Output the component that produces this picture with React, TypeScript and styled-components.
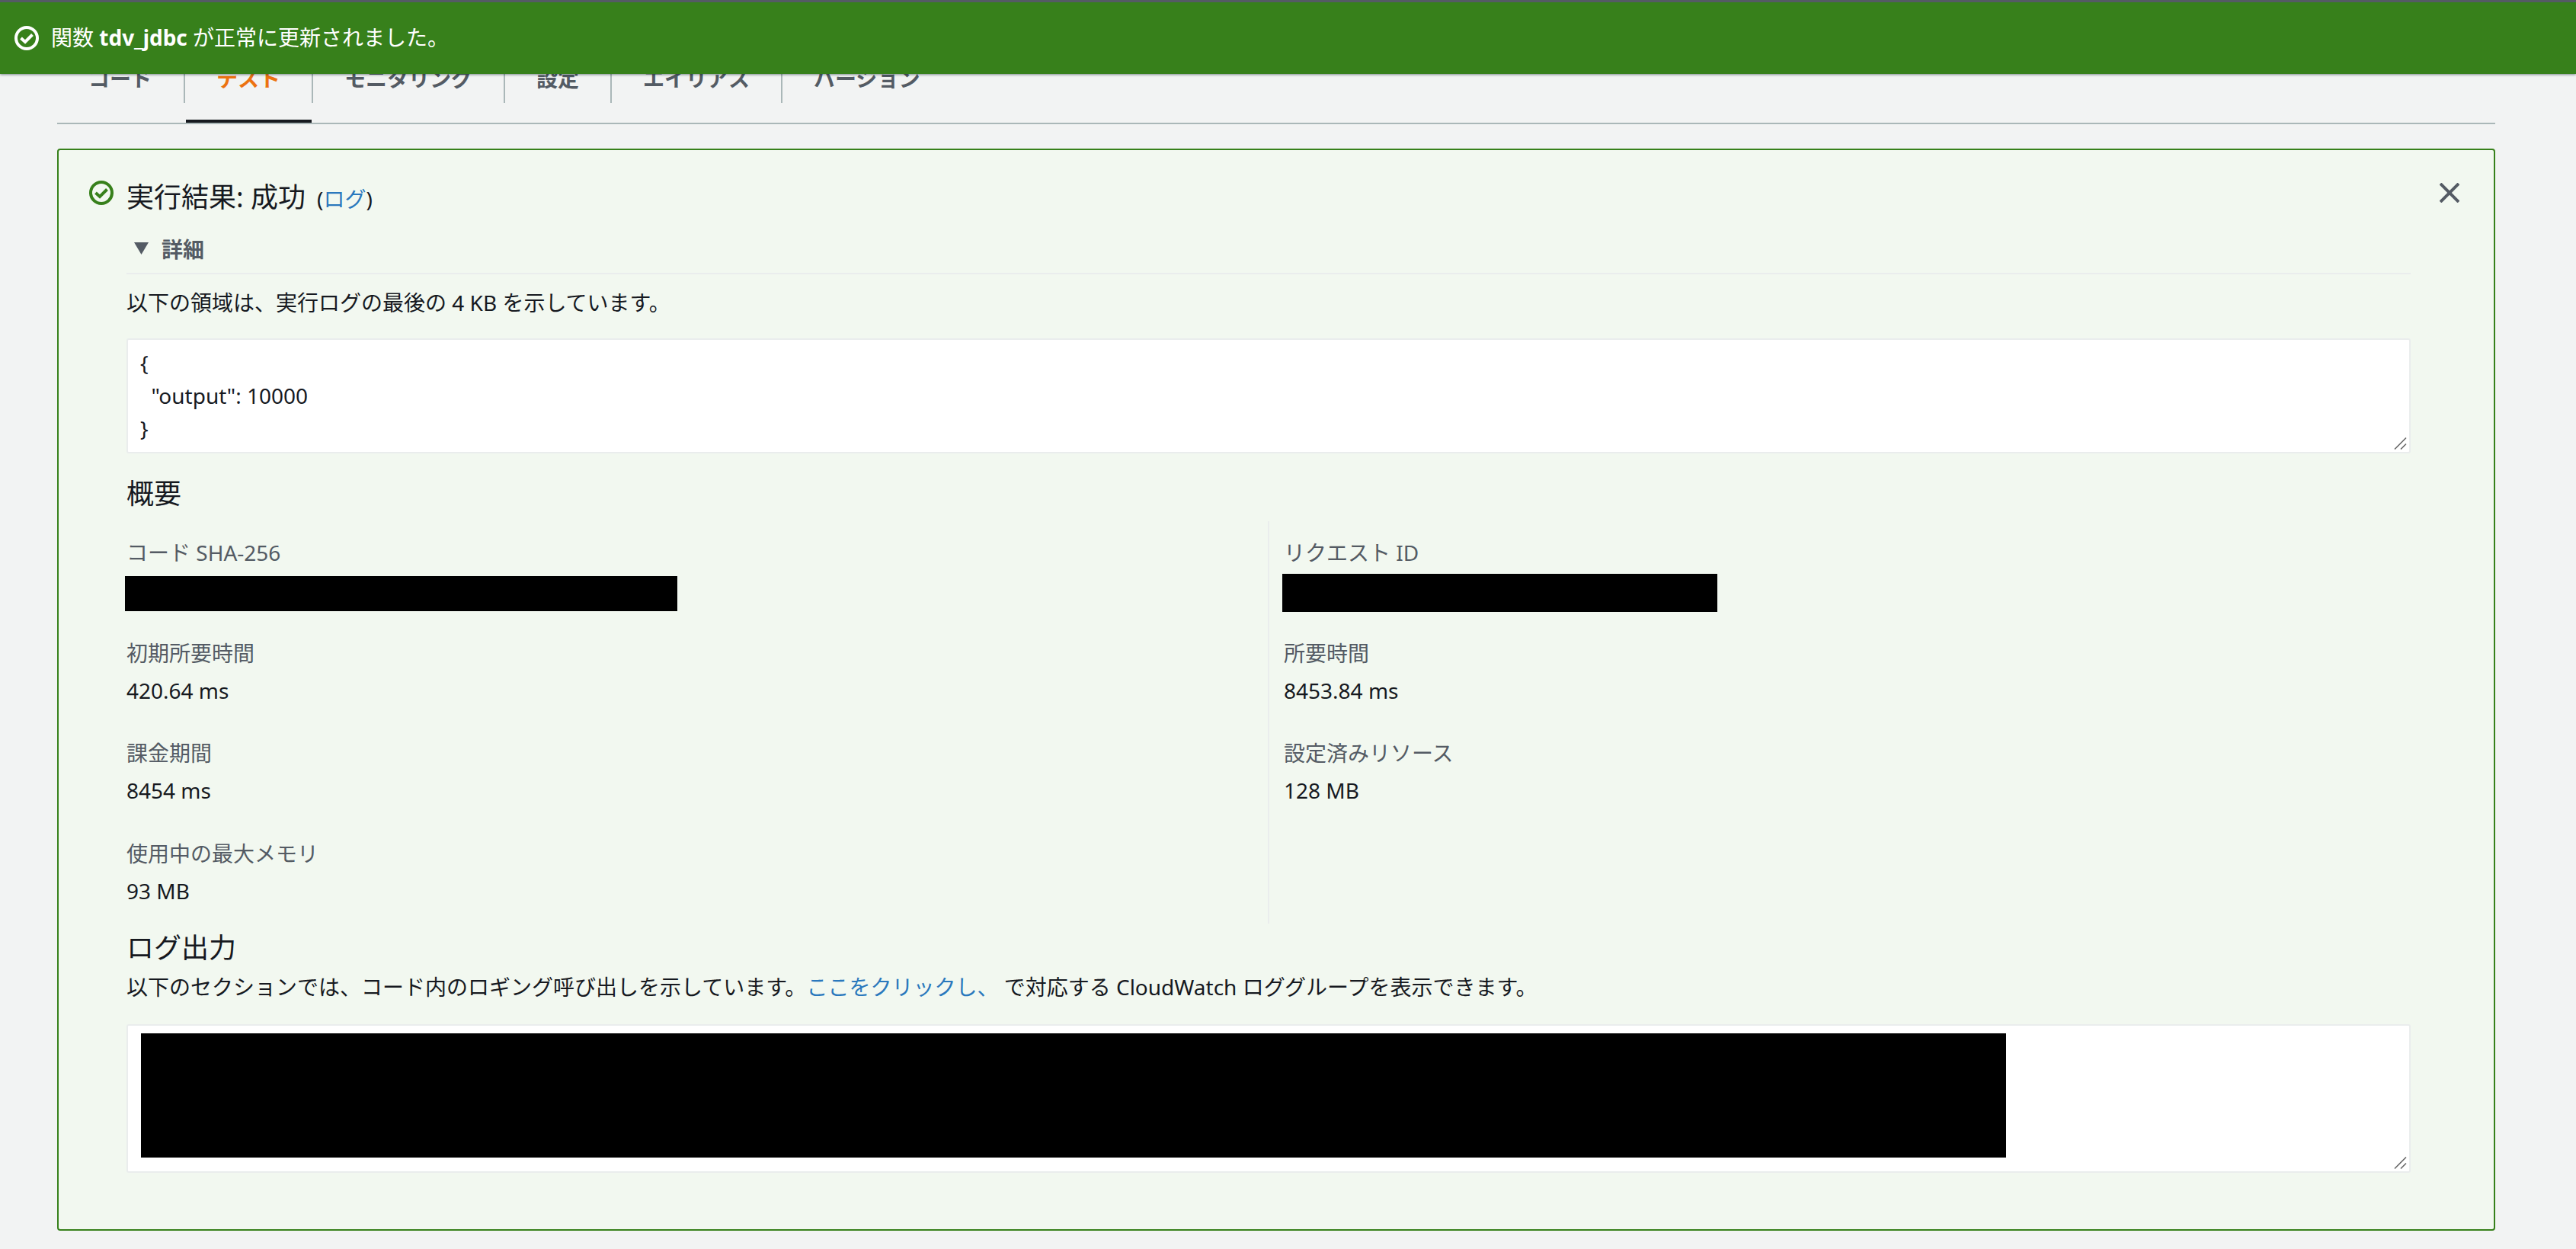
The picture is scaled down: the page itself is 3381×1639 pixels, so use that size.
import React from 'react';
import styled, { createGlobalStyle } from 'styled-components';

const GlobalStyle = createGlobalStyle`
  html, body {
    margin: 0;
    padding: 0;
    background: #f2f3f3;
  }
  body {
    font-family: "Noto Sans", "Noto Sans CJK JP", sans-serif;
    font-size: 28px;
    color: #16191f;
  }
  * { box-sizing: border-box; }
`;

const Page = styled.div`
  position: relative;
  min-height: 1639px;
  padding: 60px 106px 0 75px;
  overflow: hidden;
`;

const Flash = styled.div`
  position: absolute;
  top: 0;
  left: 0;
  right: 0;
  height: 97px;
  display: flex;
  align-items: center;
  gap: 16px;
  padding: 0 0 0 19px;
  border-top: 3px solid #545b64;
  background: #37801b;
  color: #fff;
  box-shadow: 0 1px 3px rgba(0, 28, 36, 0.5);
  z-index: 2;

  b { font-weight: 700; }
`;

const FlashText = styled.span`
  margin-bottom: 5px;
`;

const TabBar = styled.nav`
  display: flex;
  height: 103px;
  border-bottom: 2px solid #aab7b8;
`;

const Tab = styled.div<{ $active?: boolean }>`
  position: relative;
  height: 101px;
  padding-top: 11px;

  ${p => p.$active && `
    &::after {
      content: '';
      position: absolute;
      left: 1px;
      right: 2px;
      bottom: 0;
      height: 4px;
      background: #16191f;
    }
  `}
`;

const TabLabel = styled.span<{ $active?: boolean; $last?: boolean }>`
  display: block;
  height: 64px;
  line-height: 64px;
  padding: 0 41px;
  font-weight: 700;
  color: ${p => (p.$active ? '#ec7211' : '#545b64')};
  border-right: 2px solid ${p => (p.$last ? 'transparent' : '#aab7b8')};
`;

const Panel = styled.section`
  display: grid;
  grid-template-columns: 89px 1fr 109px;
  margin-top: 32px;
  height: 1420px;
  border: 2px solid #37801b;
  border-radius: 4px;
  background: #f2f8f0;
`;

const IconColumn = styled.div`
  padding: 40px 0 0 40px;
  svg { display: block; }
`;

const CloseColumn = styled.div`
  display: flex;
  justify-content: flex-end;
  padding: 43px 45px 0 0;
  svg { display: block; }
`;

const Content = styled.div`
  padding-top: 38px;
  min-width: 0;
`;

const Title = styled.div`
  display: flex;
  align-items: baseline;
  gap: 15px;
  height: 48px;
  font-size: 36px;
  line-height: 48px;

  small {
    font-size: 28px;
    line-height: 40px;
  }
`;

const Link = styled.a`
  color: #2a78bd;
  text-decoration: none;
`;

const Details = styled.div`
  display: flex;
  align-items: center;
  gap: 17px;
  height: 52px;
  margin-top: 25px;
  padding: 0 0 14px 10px;
  border-bottom: 2px solid #eaeded;
  font-weight: 700;
  color: #545b64;
`;

const Text = styled.div<{ $top: number }>`
  margin-top: ${p => p.$top}px;
  line-height: 40px;
  white-space: nowrap;
`;

const OutputBox = styled.div<{ $height: number; $top: number; $gap: number }>`
  position: relative;
  height: ${p => p.$height}px;
  margin-top: ${p => p.$gap}px;
  padding: ${p => p.$top}px 16px 0;
  border: 2px solid #eaeded;
  border-radius: 3px;
  background: #fff;
  line-height: 43px;
  white-space: pre;
`;

const Grip = styled.svg`
  position: absolute;
  right: 2px;
  bottom: 2px;
`;

const Heading = styled.h2<{ $top: number }>`
  margin: ${p => p.$top}px 0 0;
  font-size: 36px;
  line-height: 48px;
  font-weight: 400;
`;

const Summary = styled.div`
  display: grid;
  grid-template-columns: 1498px 1fr;
  margin-top: 12px;
  height: 528px;
`;

const SummaryColumn = styled.div<{ $right?: boolean }>`
  display: flex;
  flex-direction: column;
  gap: 41.5px;
  padding-top: 21px;
  ${p => p.$right && `
    border-left: 2px solid #eaeded;
    padding-left: 19px;
  `}
`;

const Item = styled.div`
  height: 90px;
`;

const Label = styled.div`
  line-height: 40px;
  color: #545b64;
`;

const Value = styled.div`
  margin-top: 9px;
  line-height: 40px;
`;

const Redacted = styled.div<{ $width: number; $height: number; $top: number; $left: number }>`
  width: ${p => p.$width}px;
  height: ${p => p.$height}px;
  margin-top: ${p => p.$top}px;
  margin-left: ${p => p.$left}px;
  background: #000;
`;

const CheckCircle = ({ color }: { color: string }) => (
  <svg width="32" height="32" viewBox="0 0 32 32" fill="none">
    <circle cx="16" cy="16" r="14" stroke={color} strokeWidth="4" />
    <path d="M8.5 16l5.5 5 9.5-9.5" stroke={color} strokeWidth="4" />
  </svg>
);

const CloseIcon = () => (
  <svg width="26" height="26" viewBox="0 0 26 26" fill="none">
    <path d="M1 1l24 24M25 1L1 25" stroke="#545b64" strokeWidth="4" />
  </svg>
);

const Caret = () => (
  <svg width="19" height="16" viewBox="0 0 19 16">
    <polygon points="0,0 19,0 9.5,16" fill="#545b64" />
  </svg>
);

const ResizeGrip = () => (
  <Grip width="18" height="18" viewBox="0 0 18 18" fill="none">
    <path d="M1 16.5L16 1.5M9 16.5L16 9.5" stroke="#666" strokeWidth="1.6" />
  </Grip>
);

const tabs = ['コード', 'テスト', 'モニタリング', '設定', 'エイリアス', 'バージョン'];

const leftItems = [
  { label: '初期所要時間', value: '420.64 ms' },
  { label: '課金期間', value: '8454 ms' },
  { label: '使用中の最大メモリ', value: '93 MB' },
];

const rightItems = [
  { label: '所要時間', value: '8453.84 ms' },
  { label: '設定済みリソース', value: '128 MB' },
];

export default function App() {
  return (
    <Page>
      <GlobalStyle />
      <Flash>
        <CheckCircle color="#fff" />
        <FlashText>
          関数 <b>tdv_jdbc</b> が正常に更新されました。
        </FlashText>
      </Flash>

      <TabBar>
        {tabs.map((tab, i) => (
          <Tab key={tab} $active={i === 1}>
            <TabLabel $active={i === 1} $last={i === tabs.length - 1}>
              {tab}
            </TabLabel>
          </Tab>
        ))}
      </TabBar>

      <Panel>
        <IconColumn>
          <CheckCircle color="#37801b" />
        </IconColumn>
        <Content>
          <Title>
            <span>実行結果: 成功</span>
            <small>
              (<Link>ログ</Link>)
            </small>
          </Title>
          <Details>
            <Caret />
            詳細
          </Details>
          <Text $top={17}>以下の領域は、実行ログの最後の 4 KB を示しています。</Text>
          <OutputBox $height={151} $top={9} $gap={27}>
            {'{\n  "output": 10000\n}'}
            <ResizeGrip />
          </OutputBox>

          <Heading $top={29}>概要</Heading>
          <Summary>
            <SummaryColumn>
              <Item>
                <Label>コード SHA-256</Label>
                <Redacted $width={725} $height={46} $top={11} $left={-2} />
              </Item>
              {leftItems.map(item => (
                <Item key={item.label}>
                  <Label>{item.label}</Label>
                  <Value>{item.value}</Value>
                </Item>
              ))}
            </SummaryColumn>
            <SummaryColumn $right>
              <Item>
                <Label>リクエスト ID</Label>
                <Redacted $width={571} $height={50} $top={8} $left={-2} />
              </Item>
              {rightItems.map(item => (
                <Item key={item.label}>
                  <Label>{item.label}</Label>
                  <Value>{item.value}</Value>
                </Item>
              ))}
            </SummaryColumn>
          </Summary>

          <Heading $top={8}>ログ出力</Heading>
          <Text $top={7}>
            以下のセクションでは、コード内のロギング呼び出しを示しています。<Link>ここをクリックし、</Link> で対応する CloudWatch ロググループを表示できます。
          </Text>
          <OutputBox $height={195} $top={10} $gap={29}>
            <Redacted $width={2448} $height={163} $top={0} $left={1} />
            <ResizeGrip />
          </OutputBox>
        </Content>
        <CloseColumn>
          <CloseIcon />
        </CloseColumn>
      </Panel>
    </Page>
  );
}
